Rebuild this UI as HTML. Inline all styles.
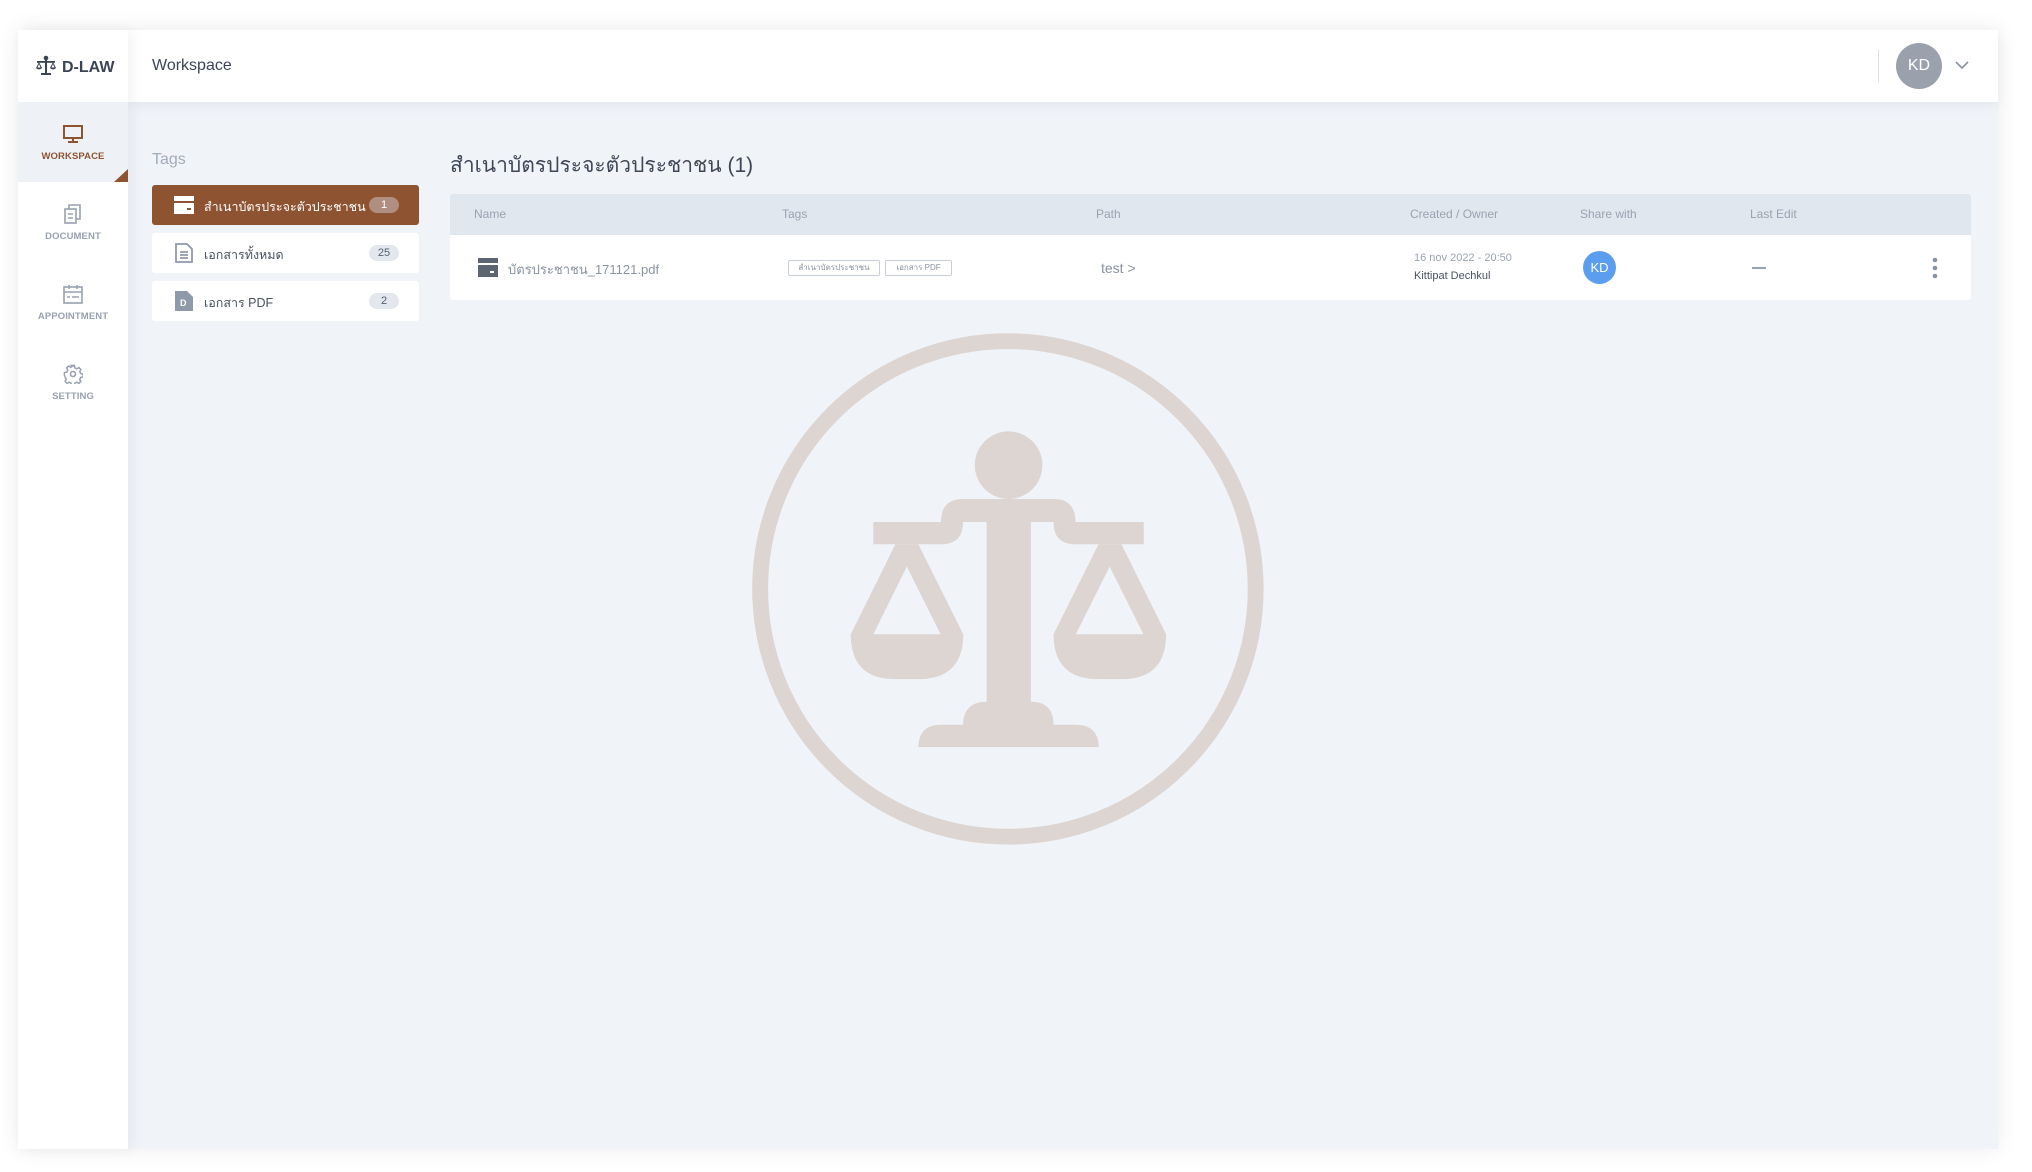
<!DOCTYPE html>
<html><head><meta charset="utf-8"><style>
*{margin:0;padding:0;box-sizing:border-box}
body{width:2032px;height:1172px;background:#fff;font-family:"Liberation Sans","Noto Sans CJK SC",sans-serif;position:relative;overflow:hidden}
.card{position:absolute;left:18px;top:30px;width:1980px;height:1119px;background:#f0f4f9;box-shadow:0 0 22px rgba(0,0,0,.08)}
.side{position:absolute;left:0;top:0;width:110px;height:1119px;background:#fff;box-shadow:4px 0 12px rgba(0,0,0,.05);z-index:2}
.hdr{position:absolute;left:110px;top:0;right:0;height:72px;background:#fff;box-shadow:0 4px 12px rgba(0,0,0,.05);z-index:1}
.abs{position:absolute}
.nav{position:absolute;left:0;width:110px;text-align:center;font-size:9.5px;font-weight:bold;color:#98a1b0;letter-spacing:.1px}
.tag{position:absolute;left:134px;width:267px;height:40px;background:#fff;border-radius:3px;font-size:12.5px;color:#4a5260}
.tag .t{position:absolute;left:52px;top:12px;white-space:nowrap}
.tag .b{position:absolute;left:217px;top:12px;width:30px;height:16px;border-radius:8px;background:#e3e8ef;font-size:11px;text-align:center;line-height:16px;color:#555e6b}
.th{position:absolute;top:0;font-size:12px;color:#9aa3b0;line-height:41px}
.cell{position:absolute}
</style></head><body>
<div class="card">
 <div class="side">
  <svg class="abs" style="left:17px;top:25px" width="22" height="22" viewBox="0 0 22 22" fill="#3c4454"><circle cx="11" cy="3" r="2.3"/><rect x="10" y="4" width="2" height="14"/><rect x="2" y="6" width="18" height="1.8"/><path d="M4 7 L1 13 Q4 16 7 13 Z M4 9 L2.5 12.5 H5.5Z" fill-rule="evenodd"/><path d="M18 7 L15 13 Q18 16 21 13 Z M18 9 L16.5 12.5 H19.5Z" fill-rule="evenodd"/><rect x="6" y="18" width="10" height="2"/></svg>
  <div class="abs" style="left:44px;top:29px;font-size:16px;font-weight:bold;color:#3c4454">D-LAW</div>
  <div class="abs" style="left:0;top:72px;width:110px;height:80px;background:#eef2f7"></div>
  <div class="abs" style="left:96px;top:139px;width:0;height:0;border-left:14px solid transparent;border-bottom:13px solid #8e5431"></div>
  <svg class="abs" style="left:45px;top:95px" width="20" height="19" viewBox="0 0 20 19" fill="none" stroke="#8e5431" stroke-width="2"><rect x="1" y="1" width="18" height="12"/><path d="M10 13v4M5 17h10"/></svg>
  <div class="nav" style="top:121px;color:#8e5431">WORKSPACE</div>
  <svg class="abs" style="left:46px;top:174px" width="18" height="20" viewBox="0 0 18 20" fill="none" stroke="#98a1b0" stroke-width="1.6"><rect x="1" y="5" width="11" height="14"/><path d="M5 5V1h11v14h-4M4 10h5M4 14h5"/></svg>
  <div class="nav" style="top:201px">DOCUMENT</div>
  <svg class="abs" style="left:45px;top:254px" width="20" height="20" viewBox="0 0 20 20" fill="none" stroke="#98a1b0" stroke-width="1.6"><rect x="1" y="3" width="18" height="16"/><path d="M1 8h18M6 1v4M14 1v4M4 13h3M9 13h7"/></svg>
  <div class="nav" style="top:281px">APPOINTMENT</div>
  <svg class="abs" style="left:45px;top:334px" width="20" height="20" viewBox="0 0 20 20" fill="none" stroke="#98a1b0" stroke-width="1.6"><path d="M8.5 1h3l.5 2.5 2 1 2.3-1.2 2 2-1.2 2.3 1 2 2.5.5v3l-2.5.5-1 2 1.2 2.3-2 2-2.3-1.2-2 1-.5 2.5h-3l-.5-2.5-2-1-2.3 1.2-2-2 1.2-2.3-1-2L1 11.5v-3l2.5-.5 1-2-1.2-2.3 2-2 2.3 1.2 2-1z" transform="scale(.95) translate(.5 .5)"/><circle cx="10" cy="10" r="2.5"/></svg>
  <div class="nav" style="top:361px">SETTING</div>
 </div>
 <div class="hdr">
  <div class="abs" style="left:24px;top:27px;font-size:16px;color:#3c4454">Workspace</div>
  <div class="abs" style="left:1750px;top:20px;width:1px;height:32px;background:#dde1e6"></div>
  <div class="abs" style="left:1768px;top:13px;width:46px;height:46px;border-radius:50%;background:#9ba1ac;color:#fff;font-size:16px;text-align:center;line-height:46px">KD</div>
  <svg class="abs" style="left:1827px;top:31px" width="14" height="9" viewBox="0 0 14 9" fill="none" stroke="#8a93a0" stroke-width="1.6"><path d="M1 1l6 6 6-6"/></svg>
 </div>
 <div class="abs" style="left:134px;top:121px;font-size:16px;color:#a3abb7">Tags</div>
 <div class="tag" style="top:155px;background:#8e5431;color:#fff"><svg class="abs" style="left:22px;top:11px" width="20" height="18" viewBox="0 0 20 18" fill="#fff"><rect x="0" y="0" width="20" height="5"/><rect x="0" y="7" width="20" height="11"/><rect x="13" y="12" width="4" height="2" fill="#8e5431"/></svg><span class="t">สำเนาบัตรประจะตัวประชาชน</span><span class="b" style="background:#b08e80;color:#fff">1</span></div>
 <div class="tag" style="top:203px"><svg class="abs" style="left:23px;top:10px" width="18" height="20" viewBox="0 0 18 20" fill="none" stroke="#8e99aa" stroke-width="1.8"><path d="M1 1h11l5 5v13H1z M5 9h8M5 12h8M5 15h8"/></svg><span class="t">เอกสารทั้งหมด</span><span class="b">25</span></div>
 <div class="tag" style="top:251px"><svg class="abs" style="left:23px;top:10px" width="18" height="20" viewBox="0 0 18 20"><path d="M0 0h12l6 6v14H0z" fill="#8e99aa"/><text x="5" y="15" font-size="9" font-weight="bold" fill="#fff" font-family="Liberation Sans">D</text></svg><span class="t">เอกสาร PDF</span><span class="b">2</span></div>
 <div class="abs" style="left:432px;top:119px;font-size:21px;color:#3f4756">สำเนาบัตรประจะตัวประชาชน (1)</div>
 <div class="abs" style="left:432px;top:164px;width:1521px;height:41px;background:#e1e7ef;border-radius:3px 3px 0 0">
  <span class="th" style="left:24px">Name</span><span class="th" style="left:332px">Tags</span><span class="th" style="left:646px">Path</span><span class="th" style="left:960px">Created / Owner</span><span class="th" style="left:1130px">Share with</span><span class="th" style="left:1300px">Last Edit</span>
 </div>
 <div class="abs" style="left:432px;top:205px;width:1521px;height:65px;background:#fff;border-radius:0 0 3px 3px">
  <svg class="abs" style="left:28px;top:23px" width="20" height="19" viewBox="0 0 20 19" fill="#5d6572"><rect width="20" height="5"/><rect y="7" width="20" height="12"/><rect x="12" y="13" width="4" height="2" fill="#fff"/></svg>
  <span class="cell" style="left:58px;top:24px;font-size:13px;color:#8a93a0">บัตรประชาชน_171121.pdf</span>
  <span class="cell" style="left:338px;top:25px;width:92px;height:16px;border:1px solid #c8ced6;font-size:8px;color:#8a93a0;text-align:center;line-height:14px;border-radius:2px;overflow:hidden;white-space:nowrap">สำเนาบัตรประชาชน</span>
  <span class="cell" style="left:435px;top:25px;width:67px;height:16px;border:1px solid #c8ced6;font-size:8px;color:#8a93a0;text-align:center;line-height:14px;border-radius:2px">เอกสาร PDF</span>
  <span class="cell" style="left:651px;top:25px;font-size:14px;color:#8a93a0">test &gt;</span>
  <span class="cell" style="left:964px;top:17px;font-size:11px;color:#9aa3b0">16 nov 2022 - 20:50</span>
  <span class="cell" style="left:964px;top:35px;font-size:11px;color:#4a5260">Kittipat Dechkul</span>
  <span class="cell" style="left:1133px;top:16px;width:33px;height:33px;border-radius:50%;background:#5b9ef0;color:#fff;font-size:13px;text-align:center;line-height:33px">KD</span>
  <span class="cell" style="left:1302px;top:32px;width:14px;height:1.5px;background:#9aa3b0"></span>
  <svg class="abs" style="left:1482px;top:22px" width="6" height="22" viewBox="0 0 6 22" fill="#8a93a0"><circle cx="3" cy="3" r="2.3"/><circle cx="3" cy="11" r="2.3"/><circle cx="3" cy="19" r="2.3"/></svg>
 </div>
 <svg class="abs" style="left:732px;top:300px" width="530" height="530" viewBox="0 0 1568 1568" fill="#ddd5d1">
  <circle cx="763" cy="766" r="733" fill="none" stroke="#ddd5d1" stroke-width="47"/>
  <circle cx="765" cy="400" r="100"/>
  <path d="M365,568 H565 Q565,500 630,500 H898 Q963,500 963,568 H1165 V634 H963 Q898,634 898,568 H831 V1100 Q898,1100 898,1168 H963 Q1030,1168 1032,1234 H498 Q500,1168 565,1168 H630 Q632,1100 700,1100 V568 H630 Q630,634 565,634 H365 Z"/>
  <path fill-rule="evenodd" d="M430,634 H498 L631,900 Q631,1033 498,1033 H430 Q298,1033 298,900 Z M464,700 L365,900 H564 Z"/>
  <path fill-rule="evenodd" d="M1031,634 H1099 L1231,900 Q1231,1033 1099,1033 H1031 Q898,1033 898,900 Z M1064,700 L964,900 H1164 Z"/>
 </svg>
</div>
</body></html>
